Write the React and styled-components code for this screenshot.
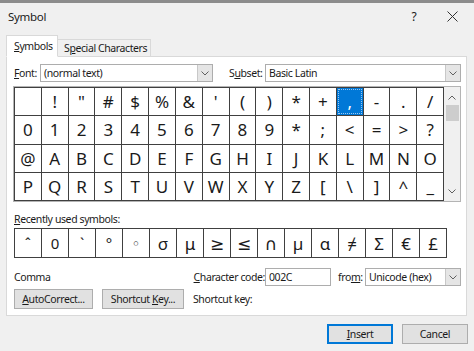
import React from 'react'
import styled, { createGlobalStyle } from 'styled-components'

const GlobalStyle = createGlobalStyle`
  html, body {
    margin: 0;
    padding: 0;
    background: #f0f0f0;
  }
  body {
    font-family: "Noto Sans", "Open Sans", sans-serif;
    font-size: 10.5px;
    color: #1a1a1a;
  }
`

const Window = styled.div`
  width: 474px;
  height: 351px;
  box-sizing: border-box;
  border-top: 3px solid #8c8c8c;
  background: #f0f0f0;
  display: flex;
  flex-direction: column;
  overflow: hidden;
`

const TitleBar = styled.div`
  height: 30px;
  display: flex;
  align-items: center;
  padding: 0 0 4px 8px;
  box-sizing: border-box;
  font-size: 11.5px;
  letter-spacing: -0.3px;
  .title { flex: 1; }
  .help {
    width: 20px;
    text-align: center;
    margin-right: 18px;
    font-size: 12px;
  }
  .close {
    width: 20px;
    margin-right: 12px;
    display: flex;
    justify-content: center;
  }
`

const TabStrip = styled.div`
  display: flex;
  align-items: flex-end;
  height: 22px;
  margin-top: 2px;
  padding-left: 6px;
  margin-bottom: -1px;
  position: relative;
  z-index: 1;
`

const Tab = styled.div`
  box-sizing: border-box;
  height: ${p => (p.$active ? '22px' : '18px')};
  width: ${p => p.$w}px;
  padding-left: ${p => (p.$active ? 7 : 6)}px;
  display: flex;
  align-items: center;
  border: 1px solid #d9d9d9;
  border-bottom: ${p => (p.$active ? '1px solid #fff' : '1px solid #d9d9d9')};
  border-left: ${p => (p.$active ? '1px solid #d9d9d9' : 'none')};
  background: ${p => (p.$active ? '#fff' : '#f0f0f0')};
  letter-spacing: -0.4px;
  white-space: nowrap;
`

const Panel = styled.div`
  margin: 0 7px 0 6px;
  background: #fff;
  border: 1px solid #d9d9d9;
  padding: 7px 5px 6px 7px;
  display: flex;
  flex-direction: column;
`

const Row = styled.div`
  display: flex;
  align-items: center;
  margin-top: ${p => p.$mt || 0}px;
  height: ${p => p.$h || 18}px;
`

const Label = styled.span`
  width: ${p => (p.$w ? p.$w + 'px' : 'auto')};
  margin-left: ${p => p.$ml || 0}px;
  letter-spacing: -0.4px;
  white-space: nowrap;
  text-align: ${p => p.$align || 'left'};
  u { text-decoration: underline; text-underline-offset: 1px; }
`

const Combo = styled.div`
  box-sizing: border-box;
  height: 18px;
  width: ${p => (p.$w ? p.$w + 'px' : 'auto')};
  flex: ${p => (p.$w ? 'none' : 1)};
  border: 1px solid #adadad;
  background: #fff;
  display: flex;
  align-items: center;
  padding-left: 3px;
  letter-spacing: -0.4px;
  .text { flex: 1; }
`

const DropButton = styled.div`
  width: 15px;
  height: 16px;
  box-sizing: border-box;
  background: #e5e5e5;
  border-left: 1px solid #c8c8c8;
  display: flex;
  align-items: center;
  justify-content: center;
`

const TextInput = styled.div`
  box-sizing: border-box;
  width: 66px;
  height: 18px;
  border: 1px solid #adadad;
  padding-left: 3px;
  display: flex;
  align-items: center;
  letter-spacing: -0.4px;
`

const GridFrame = styled.div`
  margin-top: 4px;
  display: flex;
  border: 1px solid #b4b4b4;
  margin-left: -1px;
  width: 448px;
  box-sizing: border-box;
`

const CharGrid = styled.div`
  display: grid;
  grid-template-columns: repeat(16, 1fr);
  grid-auto-rows: ${p => p.$rowH}px;
  gap: 1px;
  padding: 1px;
  width: ${p => p.$w}px;
  margin-top: ${p => p.$mt || 0}px;
  box-sizing: border-box;
  background: #404040;
`

const Cell = styled.div`
  background: ${p => (p.$selected ? '#0078d7' : '#fff')};
  color: ${p => (p.$selected ? '#fff' : '#1a1a1a')};
  outline: ${p => (p.$selected ? '1px dotted #9cc6ef' : 'none')};
  outline-offset: -2px;
  display: flex;
  align-items: center;
  justify-content: center;
  font-family: "Noto Sans", "DejaVu Sans", sans-serif;
  font-size: ${p => p.$size || 17}px;
  line-height: 1;
`

const ScrollBar = styled.div`
  width: 16px;
  background: #f0f0f0;
  display: flex;
  flex-direction: column;
  align-items: center;
  .thumb {
    width: 13px;
    height: 16px;
    background: #cdcdcd;
    margin-top: 2px;
  }
  .grow { flex: 1; }
  .arrow {
    height: 12px;
    display: flex;
    align-items: center;
    justify-content: center;
    margin-top: 4px;
  }
  .arrow.down { margin: 0 0 4px; }
`

const Button = styled.button`
  box-sizing: border-box;
  height: 20px;
  width: ${p => p.$w}px;
  margin-left: ${p => p.$ml || 0}px;
  background: #e1e1e1;
  border: ${p => (p.$default ? '2px solid #0078d7' : '1px solid #adadad')};
  font-family: inherit;
  font-size: 10.5px;
  color: #1a1a1a;
  letter-spacing: -0.4px;
  padding: 0;
`

const Footer = styled.div`
  display: flex;
  justify-content: flex-end;
  padding: 8px 6px 0 0;
`

const Chevron = ({ dir = 'down' }) => (
  <svg width="8" height="5" viewBox="0 0 8 5">
    <polyline
      points={dir === 'down' ? '0.5,0.5 4,4 7.5,0.5' : '0.5,4.5 4,1 7.5,4.5'}
      fill="none"
      stroke="#606060"
      strokeWidth="1"
    />
  </svg>
)

const rows = [
  [' ', '!', '"', '#', '$', '%', '&', "'", '(', ')', '*', '+', ',', '-', '.', '/'],
  ['0', '1', '2', '3', '4', '5', '6', '7', '8', '9', '*', ';', '<', '=', '>', '?'],
  ['@', 'A', 'B', 'C', 'D', 'E', 'F', 'G', 'H', 'I', 'J', 'K', 'L', 'M', 'N', 'O'],
  ['P', 'Q', 'R', 'S', 'T', 'U', 'V', 'W', 'X', 'Y', 'Z', '[', '\\', ']', '^', '_'],
]

const recent = ['ˆ', '0', '`', '°', '◦', 'σ', 'μ', '≥', '≤', '∩', 'µ', 'α', '≠', 'Σ', '€', '£']

export default function App() {
  return (
    <>
      <GlobalStyle />
      <Window>
        <TitleBar>
          <span className="title">Symbol</span>
          <span className="help">?</span>
          <span className="close">
            <svg width="11" height="11" viewBox="0 0 11 11">
              <path d="M0.5 0.5 L10.5 10.5 M10.5 0.5 L0.5 10.5" stroke="#333" strokeWidth="1" />
            </svg>
          </span>
        </TitleBar>

        <TabStrip>
          <Tab $active $w={52}><u>S</u>ymbols</Tab>
          <Tab $w={93}>S<u>p</u>ecial Characters</Tab>
        </TabStrip>

        <Panel>
          <Row>
            <Label $w={26}><u>F</u>ont:</Label>
            <Combo $w={173}>
              <span className="text">(normal text)</span>
              <DropButton><Chevron /></DropButton>
            </Combo>
            <Label $w={36} $ml={16}>S<u>u</u>bset:</Label>
            <Combo>
              <span className="text">Basic Latin</span>
              <DropButton><Chevron /></DropButton>
            </Combo>
          </Row>

          <GridFrame>
            <CharGrid $w={432} $rowH={27.3}>
              {rows.flat().map((c, i) => (
                <Cell key={i} $selected={i === 12}>{c}</Cell>
              ))}
            </CharGrid>
            <ScrollBar>
              <div className="arrow"><Chevron dir="up" /></div>
              <div className="thumb" />
              <div className="grow" />
              <div className="arrow down"><Chevron /></div>
            </ScrollBar>
          </GridFrame>

          <Row $mt={10} $h={14}>
            <Label><u>R</u>ecently used symbols:</Label>
          </Row>

          <CharGrid $w={433} $rowH={28} $mt={2}>
            {recent.map((c, i) => (
              <Cell key={i} $size={i < 5 ? 15 : 17}>{c}</Cell>
            ))}
          </CharGrid>

          <Row $mt={10}>
            <Label $w={165}>Comma</Label>
            <Label $w={86} $align="right"><u>C</u>haracter code:</Label>
            <TextInput>002C</TextInput>
            <Label $w={27} $ml={7}>fro<u>m</u>:</Label>
            <Combo>
              <span className="text">Unicode (hex)</span>
              <DropButton><Chevron /></DropButton>
            </Combo>
          </Row>

          <Row $mt={3} $h={20}>
            <Button $w={79}><u>A</u>utoCorrect...</Button>
            <Button $w={82} $ml={9}>Shortcut <u>K</u>ey...</Button>
            <Label $ml={9}>Shortcut key:</Label>
          </Row>
        </Panel>

        <Footer>
          <Button $w={66} $default><u>I</u>nsert</Button>
          <Button $w={66} $ml={9}>Cancel</Button>
        </Footer>
      </Window>
    </>
  )
}
